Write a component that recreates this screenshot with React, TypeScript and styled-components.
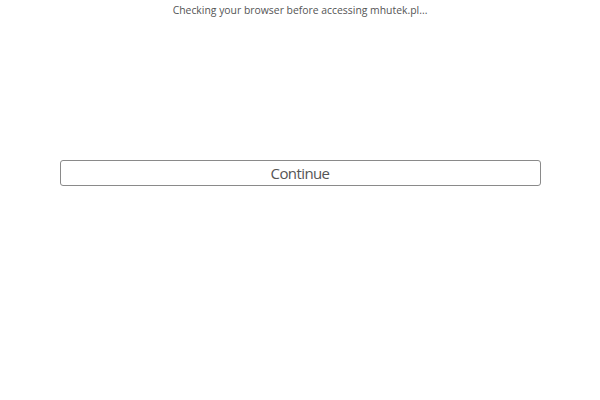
import React from 'react';
import styled, {createGlobalStyle} from 'styled-components';

const GlobalStyle = createGlobalStyle`
  html, body {
    margin: 0;
    padding: 0;
    background: #fff;
  }
  body {
    font-family: "Open Sans", sans-serif;
  }
`;

const Page = styled.div`
  display: flex;
  flex-direction: column;
  align-items: center;
  width: 600px;
  height: 400px;
`;

const Notice = styled.p`
  margin: 2px 0 0;
  font-size: 10.4px;
  line-height: 16px;
  color: #555;
  text-align: center;
`;

const ContinueButton = styled.button`
  margin-top: 142px;
  width: 481px;
  height: 26px;
  padding: 0;
  background: #fff;
  border: 1px solid #8a8a8a;
  border-radius: 3px;
  font-family: "Open Sans", sans-serif;
  font-size: 15px;
  letter-spacing: -0.6px;
  color: #555;
  cursor: pointer;
`;

export default function App() {
  return (
    <>
      <GlobalStyle />
      <Page>
        <Notice>Checking your browser before accessing mhutek.pl...</Notice>
        <ContinueButton type="button">Continue</ContinueButton>
      </Page>
    </>
  );
}
